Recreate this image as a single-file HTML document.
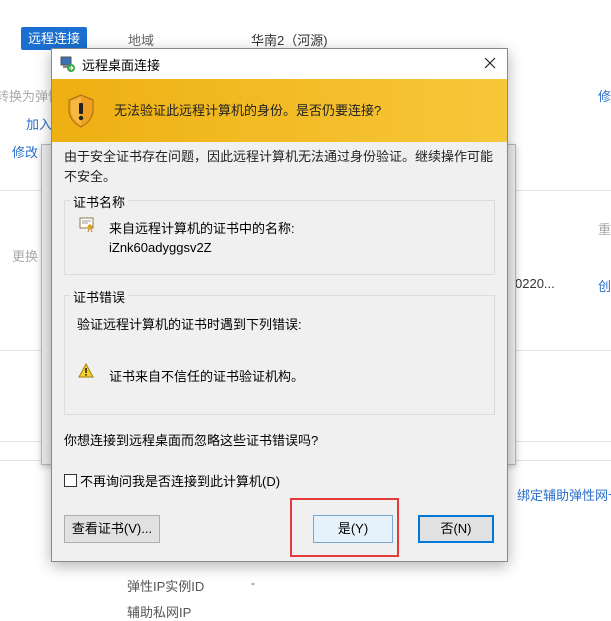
<!DOCTYPE html>
<html><head><meta charset="utf-8"><style>
*{margin:0;padding:0;box-sizing:border-box}
body{width:611px;height:610px;overflow:hidden;background:#fff;position:relative;font-family:"Liberation Sans","Noto Sans CJK SC",sans-serif;font-size:12px;color:#000}
.a{position:absolute;white-space:nowrap}
.g{color:#666}.bl{color:#2a6fc9}
.line{position:absolute;left:0;width:611px;height:1px;background:#e4e4e4}
</style></head><body>
<div class="a" style="left:21px;top:27px;width:66px;height:23px;background:#1a6fd1;border-radius:2px;color:#fff;font-size:13px;line-height:23px;text-align:center">远程连接</div>
<div class="a g" style="left:128px;top:30px;font-size:13px">地域</div>
<div class="a" style="left:251px;top:30px;font-size:13px;color:#333">华南2（河源)</div>
<div class="a" style="left:-4px;top:86px;color:#aaa;font-size:13px">转换为弹性</div>
<div class="a bl" style="left:26px;top:114px;font-size:13px">加入</div>
<div class="a bl" style="left:12px;top:142px;font-size:13px">修改</div>
<div class="a bl" style="left:598px;top:86px;font-size:13px">修</div>
<div class="a" style="left:598px;top:219px;color:#aaa;font-size:13px">重</div>
<div class="a" style="left:12px;top:246px;color:#aaa;font-size:13px">更换</div>
<div class="a" style="left:515px;top:276px;color:#333;font-size:13px">0220...</div>
<div class="a bl" style="left:598px;top:276px;font-size:13px">创</div>
<div class="a bl" style="left:517px;top:485px;font-size:13px">绑定辅助弹性网卡</div>
<div class="a" style="left:127px;top:576px;color:#555;font-size:13px">弹性IP实例ID</div>
<div class="a" style="left:251px;top:576px;color:#555">-</div>
<div class="a" style="left:127px;top:602px;color:#555;font-size:13px">辅助私网IP</div>
<div class="line" style="top:190px"></div>
<div class="line" style="top:350px"></div>
<div class="line" style="top:441px"></div>
<div class="line" style="top:460px"></div>
<div class="a" style="left:41px;top:144px;width:475px;height:321px;background:#ececec;border:1px solid #b8b8b8;box-shadow:0 2px 6px rgba(0,0,0,.2)"></div>
<div class="a" style="left:51px;top:48px;width:457px;height:514px;background:#f0f0f0;border:1px solid #8a8a8a;box-shadow:0 4px 14px rgba(0,0,0,.3)">
 <div class="a" style="left:0;top:0;width:455px;height:30px;background:#fff"></div>
 <svg class="a" style="left:8px;top:7px" width="16" height="16" viewBox="0 0 16 16"><rect x="1" y="1" width="10" height="8" fill="#3a6fb8" stroke="#555"/><rect x="3" y="9" width="6" height="3" fill="#888"/><circle cx="11" cy="12" r="4" fill="#3aa54a"/><path d="M9 12h4M11 10l2 2-2 2" stroke="#fff" fill="none"/></svg>
 <div class="a" style="left:30px;top:6px;font-size:13px">远程桌面连接</div>
 <svg class="a" style="left:432px;top:8px" width="12" height="12" viewBox="0 0 12 12"><path d="M1 1L11 11M11 1L1 11" stroke="#222" stroke-width="1.2"/></svg>
 <div class="a" style="left:0;top:30px;width:455px;height:63px;background:linear-gradient(90deg,#eeb012,#f7c73a)"></div>
 <svg class="a" style="left:15px;top:45px" width="28" height="34" viewBox="0 0 28 34"><path d="M14 1L2 6v10c0 8 6 14 12 17 6-3 12-9 12-17V6z" fill="#f0a020" stroke="#a86a10"/><path d="M14 3L4 7v9c0 7 5 12 10 15z" fill="#f8c860" opacity=".6"/><rect x="12" y="9" width="4" height="11" rx="1" fill="#222"/><circle cx="14" cy="24" r="2.2" fill="#222"/></svg>
 <div class="a" style="left:62px;top:51px;font-size:13px;color:#222">无法验证此远程计算机的身份。是否仍要连接?</div>
 <div class="a" style="left:12px;top:98px;font-size:13px;color:#222;line-height:20px;white-space:normal;width:430px">由于安全证书存在问题，因此远程计算机无法通过身份验证。继续操作可能不安全。</div>
 <div class="a" style="left:12px;top:151px;width:431px;height:75px;border:1px solid #dcdcdc"></div>
 <div class="a" style="left:18px;top:143px;background:#f0f0f0;padding:0 3px;font-size:13px">证书名称</div>
 <svg class="a" style="left:27px;top:168px" width="16" height="16" viewBox="0 0 16 16"><rect x="1" y="1" width="13" height="10" fill="#fff" stroke="#8a7a50"/><path d="M3 4h9M3 6h6" stroke="#999"/><circle cx="11" cy="10" r="2.5" fill="#e0a020"/><path d="M10 12l-1 3M12 12l1 3" stroke="#c08010"/></svg>
 <div class="a" style="left:57px;top:169px;font-size:13px">来自远程计算机的证书中的名称:</div>
 <div class="a" style="left:57px;top:191px;font-size:13px">iZnk60adyggsv2Z</div>
 <div class="a" style="left:12px;top:246px;width:431px;height:120px;border:1px solid #dcdcdc"></div>
 <div class="a" style="left:18px;top:238px;background:#f0f0f0;padding:0 3px;font-size:13px">证书错误</div>
 <div class="a" style="left:25px;top:265px;font-size:13px">验证远程计算机的证书时遇到下列错误:</div>
 <svg class="a" style="left:26px;top:314px" width="16" height="15" viewBox="0 0 16 15"><path d="M8 1L15 14H1z" fill="#f5d22a" stroke="#a08010"/><rect x="7.2" y="5" width="1.6" height="5" fill="#222"/><rect x="7.2" y="11" width="1.6" height="1.6" fill="#222"/></svg>
 <div class="a" style="left:57px;top:317px;font-size:13px">证书来自不信任的证书验证机构。</div>
 <div class="a" style="left:12px;top:381px;font-size:13px">你想连接到远程桌面而忽略这些证书错误吗?</div>
 <div class="a" style="left:12px;top:425px;width:13px;height:13px;border:1px solid #333;background:#fff"></div>
 <div class="a" style="left:28px;top:422px;font-size:13px">不再询问我是否连接到此计算机(D)</div>
 <div class="a" style="left:12px;top:466px;width:96px;height:28px;background:#e1e1e1;border:1px solid #adadad;text-align:center;line-height:26px;font-size:13px">查看证书(V)...</div>
 <div class="a" style="left:261px;top:466px;width:80px;height:28px;background:#e5f1fb;border:1px solid #7aa7d4;text-align:center;line-height:26px;font-size:13px">是(Y)</div>
 <div class="a" style="left:366px;top:466px;width:76px;height:28px;background:#e1e1e1;border:2px solid #0078d7;text-align:center;line-height:24px;font-size:13px">否(N)</div>
</div>
<div class="a" style="left:290px;top:498px;width:109px;height:59px;border:2px solid #e53a3a"></div>
</body></html>
